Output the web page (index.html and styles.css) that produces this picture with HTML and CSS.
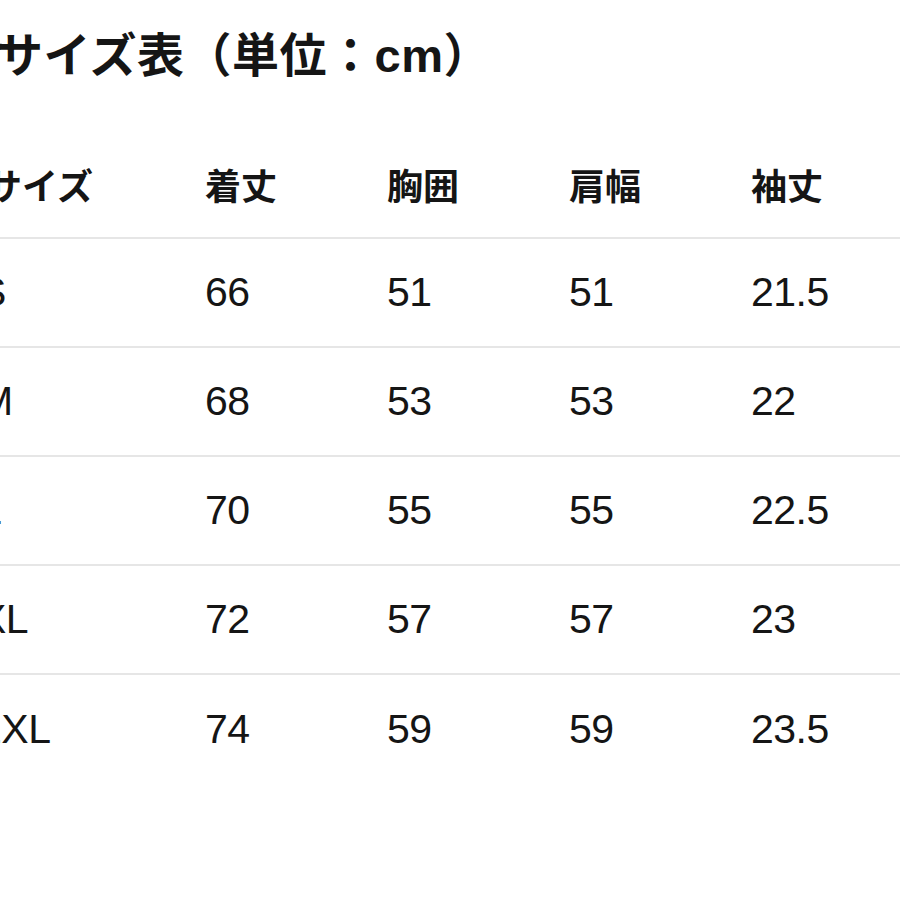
FILE: index.html
```html
<!DOCTYPE html>
<html lang="ja">
<head>
<meta charset="utf-8">
<title>サイズ表</title>
<link rel="stylesheet" href="styles.css">
</head>
<body>
<div class="page">
  <h1 class="title">サイズ表<span class="paren">（</span>単位：cm<span class="paren">）</span></h1>
  <div class="table">
    <div class="row head">
      <div class="cell first">サイズ</div>
      <div class="cell">着丈</div>
      <div class="cell">胸囲</div>
      <div class="cell">肩幅</div>
      <div class="cell">袖丈</div>
    </div>
    <div class="row">
      <div class="cell">S</div>
      <div class="cell">66</div>
      <div class="cell">51</div>
      <div class="cell">51</div>
      <div class="cell">21.5</div>
    </div>
    <div class="row">
      <div class="cell">M</div>
      <div class="cell">68</div>
      <div class="cell">53</div>
      <div class="cell">53</div>
      <div class="cell">22</div>
    </div>
    <div class="row">
      <div class="cell">L</div>
      <div class="cell">70</div>
      <div class="cell">55</div>
      <div class="cell">55</div>
      <div class="cell">22.5</div>
    </div>
    <div class="row">
      <div class="cell">XL</div>
      <div class="cell">72</div>
      <div class="cell">57</div>
      <div class="cell">57</div>
      <div class="cell">23</div>
    </div>
    <div class="row last">
      <div class="cell">2XL</div>
      <div class="cell">74</div>
      <div class="cell">59</div>
      <div class="cell">59</div>
      <div class="cell">23.5</div>
    </div>
  </div>
</div>
</body>
</html>
```

FILE: styles.css
```css
html, body {
  margin: 0;
  padding: 0;
  background: #ffffff;
}

body {
  width: 900px;
  height: 900px;
  overflow: hidden;
  color: #151515;
  font-family: "Liberation Sans", "Noto Sans CJK JP", sans-serif;
}

.page {
  margin-left: -4px;
}

.title {
  margin: 0 0 44px 0;
  padding-top: 26px;
  height: 60px;
  font-size: 47px;
  line-height: 60px;
  font-weight: 700;
  letter-spacing: 0.5px;
}

.paren {
  font-family: "Noto Sans CJK JP", sans-serif;
  line-height: 1;
}

.table {
  margin-left: -17px;
}

.row {
  display: grid;
  grid-template-columns: 226px 182px 182px 182px 1fr;
  align-items: center;
  height: 109px;
  box-sizing: border-box;
  border-bottom: 2px solid #e6e6e6;
  font-size: 41px;
  letter-spacing: -0.5px;
  width: 940px;
}

.row.head {
  font-size: 36px;
  font-weight: 700;
  letter-spacing: 0;
}

.row.head .first {
  padding-left: 7px;
}

.row.last {
  border-bottom: none;
}

.cell {
  white-space: nowrap;
}
```
